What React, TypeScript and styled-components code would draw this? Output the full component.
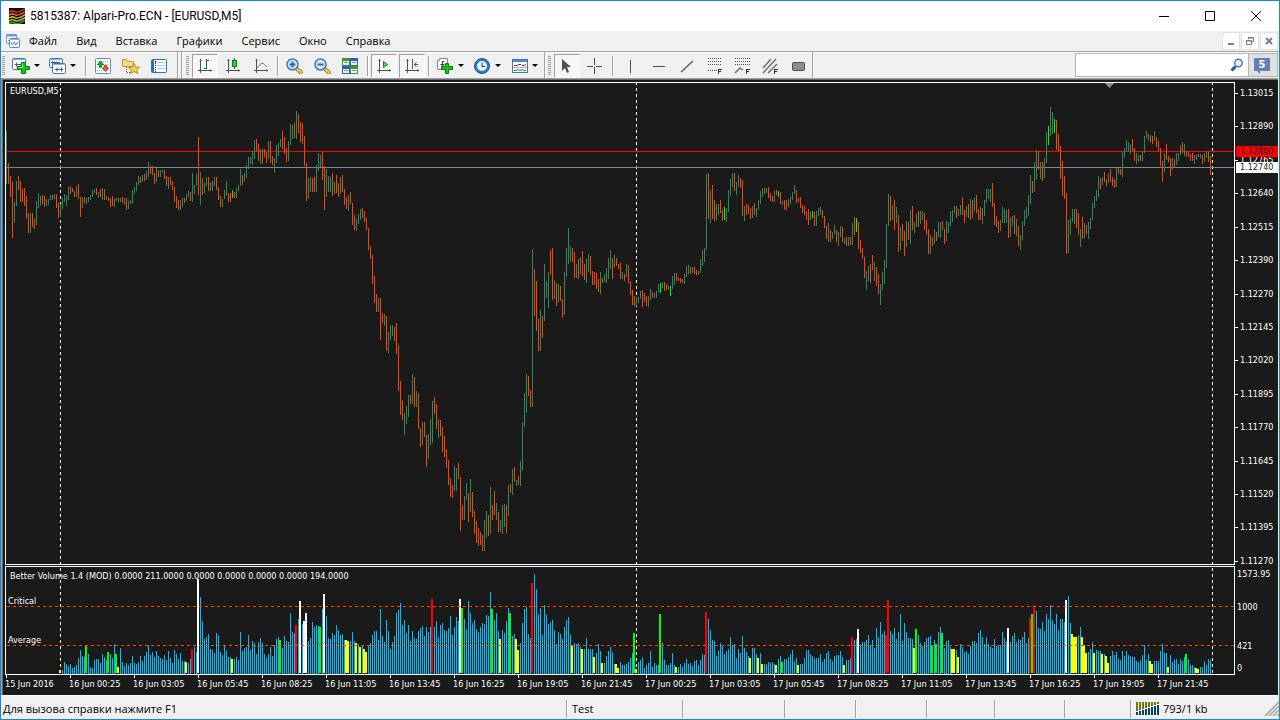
import React from "react";
import styled, { createGlobalStyle, css } from "styled-components";

/* ------------------------------------------------------------------ */
/* Data                                                                */
/* ------------------------------------------------------------------ */

/* One entry per M5 bar: top-bottom of the bar and its colour key
   (g = up, r = down, l = unchanged). Bars are two pixels apart. */
const PRICE_BARS = `
131-183g 163-183r 176-196r 182-237r 202-222g 181-205g 176-189r 181-201r 189-201r 188-205r
196-218r 213-232r 213-232g 213-226r 219-228r 201-224g 193-207g 196-205g 195-203r 196-206r
199-205g 199-204g 195-199g 195-199r 194-198g 194-207r 203-217r 204-216g 198-208g 194-201g
195-205g 187-199g 186-193r 188-191r 191-196r 186-196g 184-198r 197-216r 197-207g 197-202r
198-203g 197-201g 195-199g 190-196g 189-192g 188-194r 192-197g 189-196r 188-199g 189-199r
196-199g 197-200r 198-206r 196-205r 198-206g 198-200g 198-201r 198-201g 197-202r 198-204g
198-209r 201-208g 200-203g 190-203g 187-193g 182-190g 176-184g 177-182r 175-181g 174-180r
171-179g 162-176g 166-173r 166-174r 173-183r 168-181g 170-176r 170-176g 170-172g 170-178r
176-185r 177-188g 177-184r 181-189r 187-201r 196-207r 200-209r 200-209g 198-206g 198-202r
194-200g 191-196g 192-200r 173-201g 185-193g 174-185g 137-194r 172-204g 178-194r 183-192g
177-185g 177-190r 182-190g 181-190g 177-185g 177-189r 187-199r 196-206r 199-206g 190-198g
181-195g 193-201r 193-201r 190-197l 192-197r 188-197g 185-190g 169-185g 175-184r 173-180g
165-177g 157-168g 157-163g 151-164g 140-158g 139-150r 144-160r 149-163g 149-163r 149-156r
152-162r 141-158g 141-162r 156-164r 158-172g 145-162g 143-155g 139-146g 131-148r 137-153r
148-161r 141-160g 124-144g 125-138g 123-137r 111-138g 114-132r 122-141r 123-143r 136-165r
163-200r 178-198g 177-191g 178-191r 177-191r 165-191g 153-170g 155-166g 152-179r 166-209r
169-196g 176-191g 177-191g 173-195r 182-193g 175-192r 183-196r 177-193g 175-191r 189-204r
197-208r 195-210g 192-203r 203-224r 215-229r 219-230g 214-223g 209-219g 208-217r 211-221r
218-229r 228-249r 246-258r 255-283r 276-302r 294-311r 298-311g 298-339r 313-322r 314-325g
316-350r 332-352g 325-339g 325-335g 327-340r 323-353r 345-390r 381-414r 400-419r 413-434g
406-423g 395-416g 395-403r 374-403g 377-406r 391-406g 393-428r 428-446r 422-444g 422-436r
435-466r 434-458g 419-444g 401-442g 397-413r 404-428r 419-437g 420-435r 427-451r 436-456r
449-467r 460-484r 478-496r 485-497r 466-490g 468-490g 463-478r 477-530r 505-519r 496-519g
483-499g 493-521r 479-511g 492-516r 511-533r 521-542r 528-545r 532-544r 535-550r 520-550g
511-537g 515-535r 487-533g 505-519r 491-514r 503-519g 512-531r 520-531g 505-533g 504-526g
505-532r 485-515g 484-492r 469-494g 467-481r 480-485g 476-484r 461-485g 422-470g 393-426g
374-412g 376-395r 390-406r 249-406g 269-315r 281-330r 319-350r 310-350g 316-337r 264-320g
281-297g 272-307g 250-274r 248-299r 280-298g 283-305r 284-301g 286-300r 299-317r 272-314g
248-276g 228-263g 246-260g 248-261r 252-277r 264-277g 259-278r 257-273g 251-275r 264-279r
259-282g 254-271g 256-274r 271-284r 272-284r 273-288r 279-291r 272-293g 278-282r 274-281g
268-282g 258-278g 250-268g 258-278r 255-267g 258-265r 264-268r 263-278r 272-278g 274-280r
264-276g 265-282r 281-294r 290-304r 296-305r 297-305g 297-302g 291-298g 290-306r 293-301r
296-305r 296-306g 289-299g 292-297r 293-297g 291-297g 284-291g 283-292l 282-287g 282-290r
284-289r 285-289g 286-295l 276-288g 273-284g 273-280r 277-280r 278-282r 279-282r 274-283g
266-276g 265-273g 267-273r 267-272g 267-273r 270-274r 271-274g 259-272g 250-265g 248-261g
174-249g 173-218r 190-222g 185-218r 200-220r 204-219g 204-214g 200-212r 210-220r 207-219l
208-221g 190-211g 179-195g 173-186g 173-190r 182-194g 175-186g 178-187r 180-215r 206-220g
204-214r 205-213r 208-218r 206-217g 203-214r 208-216g 200-209g 191-203g 188-196g 188-193r
188-192g 187-197r 193-200r 196-201r 191-201g 190-194r 191-196l 192-203r 201-204g 200-209r
200-209r 199-206g 197-203g 192-199g 185-193g 190-202r 198-201r 197-207r 205-212r 206-214r
211-219r 209-224r 212-219g 211-217l 212-225r 211-225g 208-215g 207-214g 210-217r 216-227r
226-238r 223-241g 230-241r 232-238g 225-233g 230-241r 232-245g 226-236g 227-241r 238-243g
237-245r 237-245g 237-244r 223-244g 217-234r 218-231l 222-248r 240-252r 248-258r 257-277r
271-289g 266-280g 264-282r 255-269r 262-280g 267-285r 274-293r 284-304g 272-289g 260-283g
224-267g 194-225g 196-220r 205-219g 200-229r 207-222g 215-251r 227-249g 224-240r 231-255r
221-246g 222-239r 210-243g 206-229r 222-232g 214-226g 211-226r 211-223g 211-219g 213-229r
220-234r 229-253r 235-253g 237-245r 229-243g 232-240r 222-236g 222-237g 221-229r 229-243r
221-240g 222-232g 211-225g 210-221g 206-212g 206-217r 209-215g 205-214g 197-214r 210-222r
206-216g 204-217r 199-219g 200-217r 198-210g 195-212r 209-219r 207-219r 208-223g 200-215g
189-202g 189-198g 189-201g 183-206r 203-224r 216-226r 221-232r 220-230g 207-222g 209-222g
210-222g 209-237r 217-236g 216-225g 215-233r 219-235g 226-245r 235-249g 221-239g 210-225g
207-218g 195-215g 175-203g 181-192r 162-191g 150-179g 151-169r 162-178g 162-180r 158-177g
132-162g 126-144l 107-135g 112-133g 119-132l 120-149r 134-150r 146-178r 161-195r 176-198r
193-253r 220-252g 218-234g 209-221g 209-223g 209-227r 213-234r 229-246g 217-238r 223-237g
225-233r 222-238g 218-228g 203-219g 196-207g 190-200g 176-196g 178-188r 177-184g 172-181r
179-185r 173-182g 169-181r 177-185r 179-187r 168-186g 168-173r 169-174r 151-176g 148-157g
140-151g 142-151g 144-153g 139-150r 148-160r 153-163g 155-161g 155-160r 151-160g 136-152g
131-137g 134-140g 135-141r 136-143r 131-140g 137-146r 141-150r 148-165r 161-181r 153-171g
144-159r 156-161r 158-175r 158-169g 159-167r 153-164g 153-160g 145-154g 142-152r 144-155g
151-156r 151-156r 154-160r 153-160r 155-163g 155-159g 154-156r 154-157g 155-163r 153-161g
151-157g 152-161r 156-174r
`;

/* Top of every volume bar, starting with the 28th price bar. A suffix marks
   a highlighted bar: Y low, G churn, R climax, W climax and churn. */
const VOLUME_BARS = `
670Y 670 662 664 666 664 668 667 665 658 650 656 657 646G 654 667 668 660 659 659
663 654 657 660 652G 654 658 644 654G 667Y 648 662 666 663 665 663 656 663 664 662
656 661 656 652 645 655 652 657 651 656 658 659 655 660 651 658 663 650 654 659
653 661 661 662Y 663 659 649R 647 652 579W 597 621 639 637 634 649 650 653 633 635
652 655 645 651 657 657 659Y 659 657 660 632 651 648 647 635 650 641 643 654 642
638 643 654 658 654 647 656 645 639 637 640G 648 636 641 642 613 632 633 625R 619
601W 624 621W 613W 641 638 622 627 625 626 627G 609 594W 616 638 639 633 635 625 630
635 634 640 640Y 641Y 641 632 641 643Y 644 647Y 646 649Y 652Y 646 643 635 631 631 640
609 636 642 620 631 649 642 636 613 610 603 625 620 633 625 641 631 638 639 631
628 626 636 627 632 627 599R 627 621 637 625 623 630 631 628 616 635 627 617 621
599W 608G 619 629 601 613 623 620 629 632 627 623 624 615 616 592 609G 620 613 631
639Y 630 633 621 608 613G 636 634 639Y 650Y 643 623 609 607 634 638 583R 574 589 614
608 635 605 615 624 622 620 630 644 632 634 639 627 620 617 635 646Y 643 644 643
647 649Y 649 638 649 649 649 657Y 653 644 651 663Y 663 656 651 647 652 664 664Y 668Y
662 665 665 664 662 658 653 633G 669Y 662 660 657 668 665 663 651 667 663 665 665
614G 643 660 665 665 663 653 665 667Y 667 664 667 663 659 664 663 666 661 660 665
660 654 655 612R 619 630 640 641 656 651 643 646 654 651 649 637 645 644 658 649
653 636 648 652 656 658Y 648 648 654 658Y 653 664Y 664 664 662 663 662 664 665Y 659
656 662G 659 659 657 654 650 661 658 665Y 664 664 658 650 650 654 656 658 658 658
654 662 659 653 651 659 661 656 655 655 651 657 665Y 660 660 658 637R 640 639 629W
644 642 642 640 635 645 640 648 628 637 622 634 631 635R 600R 631 634 628 639 632
614 641 623 632 638 638 639 648Y 629G 635 643 646 642 638 637 636 646G 640 644G 632
627 633G 648 641 640 647 649Y 649Y 650 657Y 644 647 652 651 654 646 641 641 643 633
630 637 644 637 644 647 648 639 646 646 645 632 638 642 628W 642 636 633 642 639
640 637 632 643 638 618R 614G 605R 611 628 629 622 631 614 619 605 620 624 614 630
619 619 622 600W 596 623 634Y 637Y 637Y 635 627 637Y 645Y 653Y 652 649 642 653Y 650 651
651 654Y 654 656Y 663Y 656 651 655 652 659 660 651 656 651 655 656 657 657 661 662
660 655 645 660 654 661Y 664Y 661 661 661 651 644 653 653 667Y 655 662 659 659 664
659 661 657 654G 659 665 665 667 668Y 669Y 667 667 661 665 659 660
`;

const FIRST_BAR_X = 6;
const FIRST_VOLUME_X = 60;
const BAR_STEP = 2;
const DAY_LINES = [60, 636, 1212];

const barColors: Record<string, string> = {
  g: "#2e8b57",
  r: "#ff4500",
  l: "#00ff00",
};

const volumeColors: Record<string, string> = {
  B: "#00bfff",
  Y: "#ffff00",
  G: "#00ff00",
  R: "#ff0000",
  W: "#ffffff",
};

function buildPricePaths() {
  const paths: Record<string, string> = { g: "", r: "", l: "" };
  PRICE_BARS.trim()
    .split(/\s+/)
    .forEach((bar, i) => {
      const key = bar.slice(-1);
      const [top, bottom] = bar.slice(0, -1).split("-").map(Number);
      const x = FIRST_BAR_X + i * BAR_STEP;
      paths[key] += `M${x} ${top}h1v${bottom - top + 1}h-1z`;
    });
  return paths;
}

function buildVolumePaths() {
  const paths: Record<string, string> = { B: "", Y: "", G: "", R: "", W: "" };
  VOLUME_BARS.trim()
    .split(/\s+/)
    .forEach((bar, i) => {
      const top = parseInt(bar, 10);
      const key = /\d$/.test(bar) ? "B" : bar.slice(-1);
      const x = FIRST_VOLUME_X + i * BAR_STEP;
      paths[key] +=
        key === "B"
          ? `M${x} ${top}h1V674h-1z`
          : `M${x - 1} ${top}h2V673h-2z`;
    });
  return paths;
}

const pricePaths = buildPricePaths();
const volumePaths = buildVolumePaths();

const menuItems = ["Файл", "Вид", "Вставка", "Графики", "Сервис", "Окно", "Справка"];

const priceLabels = [
  "1.13015", "1.12890", "1.12765", "1.12640", "1.12515", "1.12390", "1.12270", "1.12145",
  "1.12020", "1.11895", "1.11770", "1.11645", "1.11520", "1.11395", "1.11270",
];

const timeLabels = [
  "15 Jun 2016", "16 Jun 00:25", "16 Jun 03:05", "16 Jun 05:45", "16 Jun 08:25",
  "16 Jun 11:05", "16 Jun 13:45", "16 Jun 16:25", "16 Jun 19:05", "16 Jun 21:45",
  "17 Jun 00:25", "17 Jun 03:05", "17 Jun 05:45", "17 Jun 08:25", "17 Jun 11:05",
  "17 Jun 13:45", "17 Jun 16:25", "17 Jun 19:05", "17 Jun 21:45",
];

/* ------------------------------------------------------------------ */
/* Styles                                                              */
/* ------------------------------------------------------------------ */

const titleFont = `Roboto, "Open Sans", sans-serif`;
const uiFont = `"Open Sans", "Noto Sans", sans-serif`;
const chartFont = `"DejaVu Sans Condensed", "Noto Sans", sans-serif`;

const GlobalStyle = createGlobalStyle`
  *, *::before, *::after { box-sizing: border-box; }
  body { margin: 0; background: #1a1a1a; }
  button, input { font: inherit; color: inherit; }
  ul, ol, p, h1 { margin: 0; padding: 0; list-style: none; }
  svg { display: block; flex: none; }
`;

const Window = styled.div`
  display: flex;
  flex-direction: column;
  min-height: 100vh;
  border: 1px solid #1883d7;
  background: #f0f0f0;
  color: #000;
  font-family: ${uiFont};
  font-size: 11px;
  line-height: 16px;
  overflow: hidden;
`;

const TitleBar = styled.header`
  display: flex;
  align-items: center;
  height: 30px;
  padding-left: 8px;
  background: #fff;
`;

const Title = styled.h1`
  flex: 1;
  padding-left: 5px;
  font-family: ${titleFont};
  font-size: 12px;
  font-weight: 400;
  line-height: 16px;
  white-space: nowrap;
`;

const CaptionButton = styled.button`
  display: flex;
  align-items: center;
  justify-content: center;
  width: 46px;
  height: 29px;
  padding: 0;
  border: 0;
  background: none;
`;

const MenuBar = styled.nav`
  display: flex;
  align-items: center;
  height: 20px;
  padding-left: 4px;
`;

const MenuList = styled.ul`
  display: flex;
  flex: 1;
  gap: 1px;
`;

const MenuButton = styled.button`
  display: block;
  padding: 0 9px;
  border: 0;
  background: none;
  line-height: 16px;
`;

const MdiButtons = styled.div`
  display: flex;
  gap: 1px;
  padding-right: 1px;
`;

const MdiButton = styled.button`
  display: flex;
  align-items: center;
  justify-content: center;
  width: 18px;
  height: 18px;
  padding: 0;
  border: 1px solid #e2e2e2;
  background: #fff;
`;

const ToolBar = styled.div`
  display: flex;
  height: 27px;
  border-top: 1px solid #a0a0a0;
  box-shadow: inset 0 1px #fff;
  padding-right: 1px;
`;

const ToolGroup = styled.div<{ $lead?: number; $tail?: number }>`
  display: flex;
  align-items: center;
  gap: 2px;
  padding: 1px ${(p) => p.$tail ?? 0}px 0 ${(p) => p.$lead ?? 0}px;
  border-right: 1px solid #a0a0a0;
  box-shadow: 1px 0 #fff;
`;

const Grip = styled.span`
  width: 3px;
  height: 20px;
  margin-right: 1px;
  background: repeating-linear-gradient(#a0a0a0 0 1px, #f0f0f0 1px 2px);
`;

const ToolButton = styled.button<{ $pressed?: boolean; $menu?: boolean }>`
  display: flex;
  align-items: center;
  justify-content: center;
  gap: 4px;
  width: ${(p) => (p.$menu ? 35 : 26)}px;
  height: 24px;
  padding: 0;
  border: 1px solid transparent;
  background: none;
  ${(p) =>
    p.$pressed &&
    css`
      border-color: #a0a0a0 #fff #fff #a0a0a0;
      background: #f7f7f7;
    `}
`;

const Caret = styled.span`
  border: 3px solid transparent;
  border-top-color: #000;
  border-bottom: 0;
`;

const Separator = styled.span<{ $before?: number; $after?: number }>`
  width: 2px;
  height: 20px;
  margin: 0 ${(p) => p.$after ?? 0}px 0 ${(p) => p.$before ?? 1}px;
  border-left: 1px solid #a0a0a0;
  border-right: 1px solid #fff;
`;

const Search = styled.label`
  display: flex;
  align-items: center;
  width: 174px;
  height: 24px;
  margin: 1px 0 0 auto;
  padding-right: 4px;
  border: 1px solid #b4b4b4;
  background: #fff;
`;

const SearchInput = styled.input`
  flex: 1;
  min-width: 0;
  padding: 0 4px;
  border: 0;
  outline: 0;
  background: none;
`;

const MessagesButton = styled.button`
  display: flex;
  align-items: center;
  justify-content: center;
  width: 29px;
  height: 24px;
  margin-top: 1px;
  padding: 2px 2px 0 0;
  border: 1px solid #b4b4b4;
  border-left: 0;
  background: #e1e1e1;
`;

const ChartWindow = styled.main`
  flex: 1;
  border: 0 solid #696969;
  border-top: 1px solid #a0a0a0;
  border-left: 1px solid #a0a0a0;
  box-shadow: inset 1px 1px #696969;
  margin-right: 1px;
  padding: 3px 0 0 3px;
  background: #1a1a1a;
  color: #fff;
  font-family: ${chartFont};
  font-size: 9px;
  line-height: 11px;
`;

const PanelRow = styled.section`
  position: relative;
  display: flex;
  & + & {
    margin-top: 1px;
  }
`;

const Plot = styled.div`
  flex: 1;
  min-width: 0;
  border: 1px solid #fff;
  overflow: hidden;
`;

const ScaleList = styled.ul`
  display: flex;
  flex-direction: column;
  justify-content: space-between;
  width: 43px;
  margin-bottom: -2px;
  padding-top: 6px;
`;

const ScaleLabel = styled.li`
  display: flex;
  align-items: center;
  gap: 2px;
  height: 11px;
  white-space: nowrap;
  &::before {
    content: "";
    width: 3px;
    height: 1px;
    background: #fff;
  }
`;

const VolumeScale = styled.ul`
  width: 43px;
  padding: 3px 0 0 2px;
`;

const VolumeLabel = styled.li<{ $step: number }>`
  height: ${(p) => p.$step}px;
  white-space: nowrap;
`;

const PriceTag = styled.output<{ $top: number; $color: string }>`
  position: absolute;
  top: ${(p) => p.$top}px;
  right: 0;
  width: 42px;
  height: 11px;
  padding-left: 4px;
  background: ${(p) => p.$color};
  color: #1a1a1a;
`;

const TimeScale = styled.ol`
  display: flex;
  height: 20px;
  overflow: hidden;
`;

const TimeLabel = styled.li`
  flex: none;
  width: 64px;
  white-space: nowrap;
  &::before {
    content: "";
    display: block;
    width: 1px;
    height: 3px;
    margin: 0 0 1px 1px;
    background: #fff;
  }
`;

const StatusBar = styled.footer`
  display: flex;
  align-items: center;
  height: 24px;
  border-top: 1px solid #fff;
  padding: 2px 0 0 2px;
  white-space: nowrap;
`;

const StatusCell = styled.div<{ $width?: number }>`
  display: flex;
  align-items: center;
  gap: 4px;
  height: 18px;
  padding-left: 5px;
  border-left: 1px solid #a0a0a0;
  box-shadow: inset 1px 0 #fff;
  ${(p) => (p.$width ? `width: ${p.$width}px;` : "flex: none;")}
`;

const StatusMessage = styled.p`
  flex: 1;
`;

/* ------------------------------------------------------------------ */
/* Icons                                                               */
/* ------------------------------------------------------------------ */

type IconProps = { size?: number; w?: number; children: React.ReactNode };

const Icon = ({ size = 16, w, children }: IconProps) => (
  <svg
    width={w ?? size}
    height={size}
    viewBox={`0 0 ${w ?? size} ${size}`}
    fill="none"
    aria-hidden="true"
  >
    {children}
  </svg>
);

const LogoIcon = () => (
  <Icon>
    <path fill="#000" d="M0 0h16v16H0z" />
    <g strokeWidth="1.5">
      <path stroke="#e02818" d="M0 4.5c2-2 4-2 6-.8s5 .3 10-3" />
      <path stroke="#e8681c" d="M0 7.5c2-2 4-2 6-.8s5 .3 10-3" />
      <path stroke="#d8b020" d="M0 10.5c2-2 4-2 6-.8s5 .3 10-3" />
      <path stroke="#98c828" d="M0 13.3c2-2 4-2 6-.8s5 .3 10-3" />
      <path stroke="#40a828" d="M0 16c2-2 4-2 6-.8s5 .3 10-3" />
    </g>
  </Icon>
);

const DocumentIcon = () => (
  <Icon w={15}>
    <rect x="1.5" y="1.5" width="10" height="9" rx="1" fill="#fff" stroke="#6a9bd8" />
    <path stroke="#6a9bd8" d="M1 2.500h11" strokeWidth="2" />
    <path stroke="#6a9bd8" d="M3 7.500h2l1-2" />
    <rect x="4.500" y="5.500" width="10" height="9" rx="1" fill="#fff" stroke="#4f86cf" />
    <path stroke="#8fb5e6" d="M4 6.500h11" />
    <path stroke="#4f86cf" d="M6 9l1.500 3L9.500 9l1.500 3 2-3" />
  </Icon>
);

const NewChartIcon = () => (
  <Icon w={18}>
    <rect x=".5" y=".5" width="13" height="11" rx="1" fill="#fff" stroke="#3f76b5" />
    <path stroke="#8cb6e6" d="M1 1.500h12" />
    <path stroke="#557" d="M2.500 6.500h8M4.500 4.500v4M9.500 4.500v4" />
    <path fill="#18c41c" stroke="#067a0a" d="M9.500 4.500h4v4h4v3h-4v4h-4v-4h-4v-3h4z" />
    <path stroke="#8cf08c" d="M10.500 5.500v4h-4" />
  </Icon>
);

const ProfilesIcon = () => (
  <Icon w={17}>
    <rect x=".5" y=".5" width="13" height="9" rx="1" fill="#e8f2fc" stroke="#3f76b5" />
    <path stroke="#8cb6e6" d="M1 1.500h12" />
    <path stroke="#557" d="M3.500 3v3M2 4.500h9" />
    <rect x="3.500" y="5.500" width="13" height="10" rx="1" fill="#fff" stroke="#3f76b5" />
    <path stroke="#8cb6e6" d="M4 6.500h12" />
    <path stroke="#557" d="M6 11.500h8M8 9.500v4M12.500 9.500v4" />
  </Icon>
);

const MarketIcon = () => (
  <Icon>
    <rect x=".5" y=".5" width="15" height="15" rx="1" fill="#fff" stroke="#5b8cc4" />
    <path stroke="#8cb6e6" d="M2 3.500h12M2 6.500h12M2 9.500h12M2 12.500h12" strokeDasharray="1 1" />
    <path fill="#24b024" stroke="#0a7a10" d="M5.500 3 8.500 6.500H6.700V9H4.300V6.500H2.500z" />
    <path fill="#f06a30" stroke="#b83210" d="M10.500 13.500 7.500 10H9.300V7.500h2.400V10h1.800z" />
  </Icon>
);

const NavigatorIcon = () => (
  <Icon w={18}>
    <path fill="#f8dc84" stroke="#c09a38" d="M.5 8.500v-7h4l1 2h6v5z" />
    <path stroke="#444" d="M4.500 9v6M5 14.500h4" strokeDasharray="1 1" />
    <path
      fill="#f6cf4c"
      stroke="#b88a1c"
      d="m12 5.500 1.700 3.400 3.800.4-2.800 2.500.9 3.700-3.600-2-3.600 2 .9-3.700L6.500 9.300l3.800-.4z"
    />
  </Icon>
);

const TerminalIcon = () => (
  <Icon>
    <rect x=".5" y="1.500" width="15" height="13" rx="1" fill="#fff" stroke="#2f6bb0" />
    <path stroke="#2f6bb0" strokeWidth="2" d="M2 2v12" />
    <path stroke="#222" d="M4.500 3v11" strokeDasharray="1 1" />
    <path stroke="#a9c7ec" d="M6 4.500h8M6 7.500h8M6 10.500h8" />
    <path stroke="#c02020" d="M4 4.500h1" />
  </Icon>
);

const axes = <path stroke="#505050" d="M3.500 1v14M1 12.500h14M2.500 2.500h2M13.500 11.500v2" />;

const BarsIcon = () => (
  <Icon>
    {axes}
    <path stroke="#068010" d="M9.500 1v10M10 2.500h2M7 10.500h2" />
  </Icon>
);

const CandlesIcon = () => (
  <Icon>
    {axes}
    <path stroke="#068010" d="M9.500 0v11" />
    <rect x="7.500" y="2.500" width="4" height="6" fill="#30d040" stroke="#068010" />
  </Icon>
);

const LineIcon = () => (
  <Icon>
    {axes}
    <path stroke="#3c9a48" d="M4 10c2-1 3-5 5-5s3 3 5 4" />
  </Icon>
);

const ZoomIcon = ({ plus }: { plus?: boolean }) => (
  <Icon w={17}>
    <path stroke="#a87a18" strokeWidth="4" d="m10 10 6 5.500" />
    <path stroke="#f4cf58" strokeWidth="2" d="m10 10 5.500 5" />
    <circle cx="6.500" cy="6.500" r="5.500" fill="#d4eafc" stroke="#3a78be" strokeWidth="1.500" />
    <path stroke="#2866b0" strokeWidth="2" d={plus ? "M3.500 6.500h6M6.500 3.500v6" : "M3.500 6.500h6"} />
  </Icon>
);

const TileIcon = () => (
  <Icon>
    <path fill="#2a5cc8" d="M8 0h8v8H8zM0 8h8v8H0z" />
    <path fill="#3a9c20" d="M0 0h8v8H0zM8 8h8v8H8z" />
    <path fill="#eef6ff" d="M1 3h6v4H1zM9 3h6v4H9zM1 11h6v4H1zM9 11h6v4H9z" />
    <path stroke="#88a" d="M2 4.500h4M10 4.500h4M2 12.500h4M10 12.500h4" />
  </Icon>
);

const AutoScrollIcon = () => (
  <Icon>
    {axes}
    <path fill="#58d060" stroke="#068010" d="M7.500 3.500v6l4-3z" />
  </Icon>
);

const ChartShiftIcon = () => (
  <Icon>
    {axes}
    <path stroke="#1868a0" d="M8.500 1v10" />
    <path stroke="#b83210" d="M10 6.500h4M12.500 4 10.500 6.500l2 2.500" />
  </Icon>
);

const IndicatorsIcon = () => (
  <Icon w={17}>
    <path fill="#fff" stroke="#888" d="M.5 2.500h2v-2h8v11H.5z" />
    <path stroke="#333" d="M7.500 3.500h-2v6h-1M3.500 6.500h4" />
    <path fill="#18c41c" stroke="#067a0a" d="M8.500 5.500h3v3h4v3h-4v4h-3v-4h-4v-3h4z" />
  </Icon>
);

const ClockIcon = () => (
  <Icon w={17}>
    <circle cx="8" cy="8" r="7.500" fill="#2c7ad8" stroke="#1a4f98" />
    <circle cx="8" cy="8" r="5" fill="#e8f4ff" />
    <path stroke="#234" d="M8 4.500v4h3" />
  </Icon>
);

const TemplatesIcon = () => (
  <Icon>
    <rect x=".5" y="1.500" width="15" height="13" fill="#fff" stroke="#3f76b5" />
    <path stroke="#4f8ad0" strokeWidth="2" d="M1 3h14" />
    <path stroke="#8cb6e6" d="M1 9.500h14" />
    <path stroke="#a02020" d="M2 7.500h3l2-1h2l1 1h2l2-1" />
    <path stroke="#209030" d="M2 12.500h2l2-1 2 1 2-1 2 1h2" />
  </Icon>
);

const CursorIcon = () => (
  <Icon>
    <path fill="#505050" d="M3 1v12l3-3 2 5 2-1-2-5h4z" />
  </Icon>
);

const CrosshairIcon = () => (
  <Icon>
    <path stroke="#505050" d="M7.500 0v7M7.500 9v7M0 8.500h6M9 8.500h6" />
  </Icon>
);

const VerticalLineIcon = () => (
  <Icon>
    <path stroke="#505050" d="M8.500 2v13" />
  </Icon>
);

const HorizontalLineIcon = () => (
  <Icon>
    <path stroke="#505050" d="M3 8.500h12" />
  </Icon>
);

const TrendLineIcon = () => (
  <Icon>
    <path stroke="#606060" strokeWidth="1.500" d="M3 14 15 3" />
  </Icon>
);

const letterF = <path stroke="#333" d="M12.500 11v5M13 11.500h3M13 13.500h2" />;

const FiboIcon = () => (
  <Icon>
    <path
      stroke="#505050"
      strokeDasharray="1 1"
      d="M2 .5h14M2 3.500h14M2 6.500h14M2 12.500h9"
    />
    {letterF}
  </Icon>
);

const FiboFanIcon = () => (
  <Icon>
    <path stroke="#505050" strokeDasharray="1 1" d="M1 .5h15M1 3.500h15M1 6.500h15" />
    <path stroke="#707070" strokeWidth="1.500" d="m1 15 5-5 3 2" />
    {letterF}
  </Icon>
);

const ChannelIcon = () => (
  <Icon>
    <path stroke="#707070" strokeWidth="1.500" d="M1 10 9 1M1 15 14 1M6 15l9-9" />
    {letterF}
  </Icon>
);

const RectangleIcon = () => (
  <Icon>
    <rect x="2.500" y="4.500" width="12" height="8" rx="1" fill="#8c8c8c" stroke="#505050" />
  </Icon>
);

const SearchIcon = () => (
  <Icon size={14}>
    <path stroke="#2a50a8" strokeWidth="3" d="m1.500 12.500 4-4" />
    <circle cx="8.500" cy="5" r="3.800" fill="#eaf3ff" stroke="#4a78d8" strokeWidth="1.500" />
  </Icon>
);

const MessagesIcon = () => (
  <Icon w={18}>
    <path fill="#6480b4" d="M1 0h16v13H7v3l-3-3H1z" />
    <text
      x="9"
      y="10"
      textAnchor="middle"
      fill="#fff"
      fontFamily="DejaVu Sans, sans-serif"
      fontSize="10"
      fontWeight="700"
    >
      5
    </text>
  </Icon>
);

const TrafficIcon = () => (
  <Icon w={23} size={13}>
    {[0, 1, 2, 3, 4, 5, 6, 7].map((i) => (
      <g key={i}>
        <path fill="#6b7a10" d={`M${i * 3} 0h2v${9 - i}h-2z`} />
        <path fill="#0c4460" d={`M${i * 3} ${10 - i}h2V13h-2z`} />
      </g>
    ))}
  </Icon>
);

const ResizeGripIcon = () => (
  <Icon size={15}>
    <path stroke="#a0a0a0" strokeWidth="1.500" d="M1 15 15 1M5 15 15 5M9 15l6-6M13 15l2-2" />
  </Icon>
);

/* ------------------------------------------------------------------ */
/* Charts                                                              */
/* ------------------------------------------------------------------ */

const DayLines = ({ from, to }: { from: number; to: number }) => (
  <>
    {DAY_LINES.map((x) => (
      <path key={x} stroke="#fff" strokeDasharray="3 3" d={`M${x + 0.5} ${from}V${to}`} />
    ))}
  </>
);

const PriceChart = () => (
  <svg
    width="1228"
    height="481"
    viewBox="6 83 1228 481"
    shapeRendering="crispEdges"
    role="img"
    aria-label="EURUSD,M5"
  >
    <DayLines from={82} to={564} />
    <path fill="#ff0000" d="M6 151h1228v1H6z" />
    <path fill="#778899" d="M6 167h1228v1H6z" />
    {Object.keys(pricePaths).map((key) => (
      <path key={key} fill={barColors[key]} d={pricePaths[key]} />
    ))}
    <path fill="#778899" d="M1105 83h9l-4 5h-1z" />
    <text x="10" y="94" fill="#fff">
      EURUSD,M5
    </text>
  </svg>
);

const VolumeChart = () => (
  <svg
    width="1228"
    height="107"
    viewBox="6 567 1228 107"
    shapeRendering="crispEdges"
    role="img"
    aria-label="Better Volume"
  >
    <DayLines from={568} to={674} />
    {Object.keys(volumePaths).map((key) => (
      <path key={key} fill={volumeColors[key]} d={volumePaths[key]} />
    ))}
    <path stroke="#ff4500" strokeDasharray="3 3" d="M7 606.500H1234M7 645.500H1234" />
    <g fill="#fff">
      <text x="10" y="579">
        Better Volume 1.4 (MOD) 0.0000 211.0000 0.0000 0.0000 0.0000 0.0000 194.0000
      </text>
      <text x="8" y="604">
        Critical
      </text>
      <text x="8" y="643">
        Average
      </text>
    </g>
  </svg>
);

/* ------------------------------------------------------------------ */
/* Page                                                                */
/* ------------------------------------------------------------------ */

type ToolProps = {
  label: string;
  pressed?: boolean;
  menu?: boolean;
  children: React.ReactNode;
};

const Tool = ({ label, pressed, menu, children }: ToolProps) => (
  <ToolButton type="button" aria-label={label} title={label} $pressed={pressed} $menu={menu}>
    {children}
    {menu && <Caret />}
  </ToolButton>
);

export default function App() {
  return (
    <>
      <GlobalStyle />
      <Window>
        <TitleBar>
          <LogoIcon />
          <Title>5815387: Alpari-Pro.ECN - [EURUSD,M5]</Title>
          <CaptionButton type="button" aria-label="Свернуть">
            <Icon size={12}>
              <path stroke="#000" d="M1 6.500h10" />
            </Icon>
          </CaptionButton>
          <CaptionButton type="button" aria-label="Развернуть">
            <Icon size={12}>
              <path stroke="#000" d="M1.500 1.500h9v9h-9z" />
            </Icon>
          </CaptionButton>
          <CaptionButton type="button" aria-label="Закрыть">
            <Icon size={12}>
              <path stroke="#000" d="m1 1 10 10M11 1 1 11" />
            </Icon>
          </CaptionButton>
        </TitleBar>

        <MenuBar>
          <DocumentIcon />
          <MenuList>
            {menuItems.map((item) => (
              <li key={item}>
                <MenuButton type="button">{item}</MenuButton>
              </li>
            ))}
          </MenuList>
          <MdiButtons>
            <MdiButton type="button" aria-label="Свернуть график">
              <Icon size={10}>
                <path fill="#708090" d="M2 7h6v2H2z" />
              </Icon>
            </MdiButton>
            <MdiButton type="button" aria-label="Восстановить график">
              <Icon size={10}>
                <path stroke="#708090" d="M3.500 3V1.500h5v4H7M3 2h6M1.500 4.500h5v4h-5zM1 5h6" />
              </Icon>
            </MdiButton>
            <MdiButton type="button" aria-label="Закрыть график">
              <Icon size={10}>
                <path stroke="#708090" strokeWidth="2" d="m2 2 6 6M8 2 2 8" />
              </Icon>
            </MdiButton>
          </MdiButtons>
        </MenuBar>

        <ToolBar role="toolbar">
          <ToolGroup $lead={1} $tail={5}>
            <Grip />
            <Tool label="Новый график" menu>
              <NewChartIcon />
            </Tool>
            <Tool label="Профили" menu>
              <ProfilesIcon />
            </Tool>
            <Separator $before={3} $after={1} />
            <Tool label="Обзор рынка">
              <MarketIcon />
            </Tool>
            <Tool label="Навигатор">
              <NavigatorIcon />
            </Tool>
            <Tool label="Терминал">
              <TerminalIcon />
            </Tool>
          </ToolGroup>
          <ToolGroup $lead={3} />
          <ToolGroup $lead={4} $tail={2}>
            <Grip />
            <Tool label="График баров" pressed>
              <BarsIcon />
            </Tool>
            <Tool label="График японских свечей">
              <CandlesIcon />
            </Tool>
            <Tool label="График линией">
              <LineIcon />
            </Tool>
            <Separator />
            <Tool label="Увеличить">
              <ZoomIcon plus />
            </Tool>
            <Tool label="Уменьшить">
              <ZoomIcon />
            </Tool>
            <Tool label="Расположить окна">
              <TileIcon />
            </Tool>
            <Separator $before={2} />
            <Tool label="Автопрокрутка" pressed>
              <AutoScrollIcon />
            </Tool>
            <Tool label="Сдвиг графика" pressed>
              <ChartShiftIcon />
            </Tool>
            <Separator $after={1} />
            <Tool label="Индикаторы" menu>
              <IndicatorsIcon />
            </Tool>
            <Tool label="Периоды" menu>
              <ClockIcon />
            </Tool>
            <Tool label="Шаблоны" menu>
              <TemplatesIcon />
            </Tool>
          </ToolGroup>
          <ToolGroup $lead={3} $tail={1}>
            <Grip />
            <Tool label="Курсор" pressed>
              <CursorIcon />
            </Tool>
            <Tool label="Перекрестие">
              <CrosshairIcon />
            </Tool>
            <Separator $before={2} $after={1} />
            <Tool label="Вертикальная линия">
              <VerticalLineIcon />
            </Tool>
            <Tool label="Горизонтальная линия">
              <HorizontalLineIcon />
            </Tool>
            <Tool label="Трендовая линия">
              <TrendLineIcon />
            </Tool>
            <Tool label="Линии Фибоначчи">
              <FiboIcon />
            </Tool>
            <Tool label="Веер Фибоначчи">
              <FiboFanIcon />
            </Tool>
            <Tool label="Канал Фибоначчи">
              <ChannelIcon />
            </Tool>
            <Tool label="Прямоугольник">
              <RectangleIcon />
            </Tool>
          </ToolGroup>
          <Search>
            <SearchInput type="text" aria-label="Поиск" />
            <SearchIcon />
          </Search>
          <MessagesButton type="button" aria-label="Сообщения">
            <MessagesIcon />
          </MessagesButton>
        </ToolBar>

        <ChartWindow>
          <PanelRow>
            <Plot>
              <PriceChart />
            </Plot>
            <ScaleList>
              {priceLabels.map((label) => (
                <ScaleLabel key={label}>{label}</ScaleLabel>
              ))}
            </ScaleList>
            <PriceTag $top={64} $color="#ff0000">
              1.12800
            </PriceTag>
            <PriceTag $top={80} $color="#ffffff">
              1.12740
            </PriceTag>
          </PanelRow>
          <PanelRow>
            <Plot>
              <VolumeChart />
            </Plot>
            <VolumeScale>
              <VolumeLabel $step={33}>1573.95</VolumeLabel>
              <VolumeLabel $step={39}>1000</VolumeLabel>
              <VolumeLabel $step={22}>421</VolumeLabel>
              <VolumeLabel $step={11}>0</VolumeLabel>
            </VolumeScale>
          </PanelRow>
          <TimeScale>
            {timeLabels.map((label) => (
              <TimeLabel key={label}>{label}</TimeLabel>
            ))}
          </TimeScale>
        </ChartWindow>

        <StatusBar>
          <StatusMessage>Для вызова справки нажмите F1</StatusMessage>
          <StatusCell $width={116}>Test</StatusCell>
          <StatusCell $width={102} />
          <StatusCell $width={71} />
          <StatusCell $width={71} />
          <StatusCell $width={68} />
          <StatusCell $width={70} />
          <StatusCell $width={66} />
          <StatusCell $width={134}>
            <TrafficIcon />
            793/1 kb
          </StatusCell>
          <ResizeGripIcon />
        </StatusBar>
      </Window>
    </>
  );
}
